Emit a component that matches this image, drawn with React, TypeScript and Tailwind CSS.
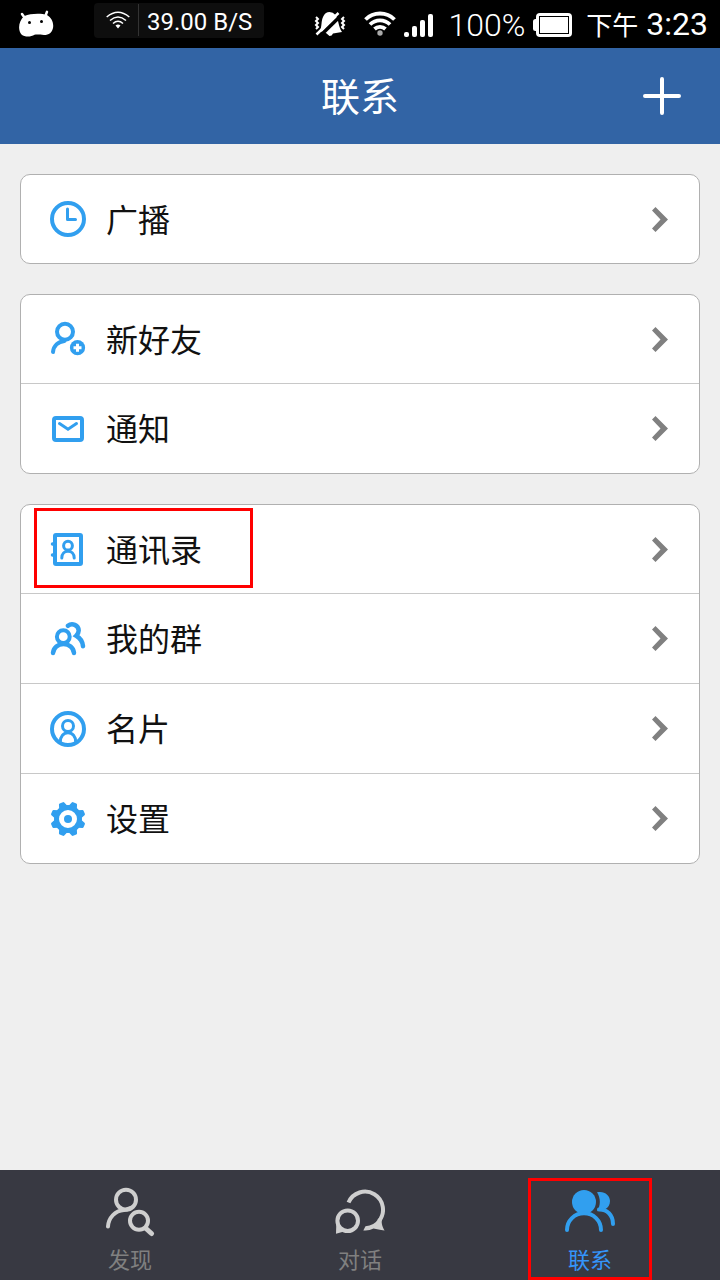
import type { ReactNode } from "react";

type Row = { label: string; icon: ReactNode; highlight?: boolean };
type Tab = { label: string; icon: ReactNode; active?: boolean };

function RowIcon({ children }: { children: ReactNode }) {
  return (
    <svg viewBox="0 0 36 36" className="w-9 h-9 shrink-0 text-[#319fef]" fill="none" stroke="currentColor"
      strokeWidth="4" strokeLinecap="round" aria-hidden="true">
      {children}
    </svg>
  );
}

function TabIcon({ children }: { children: ReactNode }) {
  return (
    <svg viewBox="0 0 50 50" className="w-[50px] h-[50px]" fill="none" stroke="currentColor"
      strokeWidth="4" strokeLinecap="round" aria-hidden="true">
      {children}
    </svg>
  );
}

const groups: Row[][] = [
  [
    {
      label: "广播",
      icon: (
        <RowIcon>
          <circle cx="18" cy="18" r="16" />
          <path d="M17.5 8V18.5H25.5" strokeWidth="3" strokeLinejoin="round" />
        </RowIcon>
      ),
    },
  ],
  [
    {
      label: "新好友",
      icon: (
        <RowIcon>
          <circle cx="15" cy="10.7" r="8" />
          <path d="M3 31C3.5 25 8 20.5 14.5 20" />
          <circle cx="27.5" cy="26.7" r="7.6" fill="currentColor" stroke="none" />
          <path d="M23.5 26.7H31.5M27.5 22.7V30.7" stroke="#fff" strokeWidth="3" strokeLinecap="butt" />
        </RowIcon>
      ),
    },
    {
      label: "通知",
      icon: (
        <RowIcon>
          <rect x="4" y="7" width="28" height="22" rx="2" />
          <path d="M9.5 12.5L18 18.3L26.5 12.5" strokeWidth="3" />
        </RowIcon>
      ),
    },
  ],
  [
    {
      label: "通讯录",
      highlight: true,
      icon: (
        <RowIcon>
          <rect x="5" y="4" width="26" height="29" rx="1" />
          <path d="M2.5 13H4M2.5 24H4" strokeWidth="3.5" />
          <circle cx="18" cy="14.7" r="4.4" strokeWidth="3" />
          <path d="M11.8 27C11.8 23 14.5 20.3 18 20.3S24.2 23 24.2 27" strokeWidth="3" />
        </RowIcon>
      ),
    },
    {
      label: "我的群",
      icon: (
        <RowIcon>
          <circle cx="13.3" cy="15.7" r="6.4" />
          <path d="M3 32C3.5 26.5 8 23 13.5 23S23.5 26.5 24 32" strokeWidth="4.5" />
          <path d="M18 4.8C22 1.4 28.5 4 28.7 9.5C28.7 12 27.5 13.5 26.2 14.8C30 17 32.6 20.5 33 25.2" strokeWidth="4.5" />
        </RowIcon>
      ),
    },
    {
      label: "名片",
      icon: (
        <RowIcon>
          <circle cx="18" cy="18" r="16" />
          <circle cx="18" cy="15" r="5.5" strokeWidth="3" />
          <path d="M10.3 31C10.3 25.5 13.5 21.8 18 21.8S25.7 25.5 25.7 31" strokeWidth="3" />
        </RowIcon>
      ),
    },
    {
      label: "设置",
      icon: (
        <RowIcon>
          <circle cx="18" cy="18" r="11.5" strokeWidth="5" />
          <circle cx="18" cy="18" r="4" fill="currentColor" stroke="none" />
          {[22.5, 67.5, 112.5, 157.5, 202.5, 247.5, 292.5, 337.5].map((angle) => (
            <path key={angle} d="M16.3 1.7H19.7L21.2 6H14.8Z" fill="currentColor" strokeWidth="2.5"
              strokeLinejoin="round" transform={`rotate(${angle} 18 18)`} />
          ))}
        </RowIcon>
      ),
    },
  ],
];

const tabs: Tab[] = [
  {
    label: "发现",
    icon: (
      <TabIcon>
        <circle cx="21" cy="12.7" r="10" />
        <path d="M3 39.5C3.5 31 10 23.5 19 23" />
        <path d="M18 21.5L31 17C27 19.5 24.5 22 22.5 24.5H18Z" fill="currentColor" stroke="none" />
        <circle cx="34" cy="33.7" r="9" />
        <path d="M41 41.5L46.5 46.5" strokeWidth="5" />
      </TabIcon>
    ),
  },
  {
    label: "对话",
    icon: (
      <TabIcon>
        <circle cx="12.7" cy="33.7" r="10.3" />
        <path d="M1.3 37L1 46.8L9 44.5Z" fill="currentColor" stroke="none" />
        <path d="M13.5 15.5A18 18 0 1 1 44 34" strokeLinecap="butt" />
        <path d="M47.5 31C45.8 35 47 39 49.6 43.6C44.5 43 42 42 38.5 41.6Q34 44 28.3 43.4L30.5 39.2Q39 39 44 31Z"
          fill="currentColor" stroke="none" />
      </TabIcon>
    ),
  },
  {
    label: "联系",
    active: true,
    icon: (
      <TabIcon>
        <circle cx="19" cy="15" r="12" fill="currentColor" stroke="none" />
        <path d="M2 43C2 33.5 9.5 26.3 19 26.3S36 33.5 36 43" />
        <path d="M32 5.3C39 3.5 45 8 45 14C45 18 43 20.5 40.5 22L32 24.3C35.8 18.5 35.8 11.5 32 5.3Z"
          fill="currentColor" stroke="none" />
        <path d="M34 22.5C42 22.2 48 28 48 37" />
      </TabIcon>
    ),
  },
];

function StatusBar() {
  return (
    <div className="flex h-12 items-center bg-black pl-[18px] pr-3 text-white">
      <svg viewBox="0 0 36 28" className="h-7 w-9" fill="currentColor" aria-hidden="true">
        <path d="M6.500 6C12 3.500 23 3 29 5C33.500 7.500 36 13 35 18C34 22.500 31 25 26 25C22.500 25 20 24.300 16.500 24.800C13 27 7 27.500 3.500 24.500C-0.500 20 0.500 10.500 6.500 6Z" />
        <path d="M4 4L7.500 9M29 1.800L27 7" stroke="currentColor" strokeWidth="2.500" strokeLinecap="round" />
        <circle cx="11.500" cy="12.500" r="1.500" fill="#000" />
        <circle cx="23.500" cy="11.500" r="1.500" fill="#000" />
      </svg>

      <div className="mb-2 ml-10 flex h-[35px] items-center rounded-sm bg-[#0e0e0e] px-3">
        <svg viewBox="0 0 24 18" className="mr-2 h-[18px] w-6" fill="none" stroke="currentColor" strokeWidth="1.5" aria-hidden="true">
          <path d="M0.700 6Q12 -3.500 23.300 6M4 9.500Q12 2.500 20 9.500M7 12.500Q12 8 17 12.500" />
          <path d="M9.500 14.500Q12 12.500 14.500 14.500L12 17.500Z" fill="currentColor" stroke="none" />
        </svg>
        <span className="border-l border-[#333] pl-2 pt-1 text-2xl leading-7">39.00 B/S</span>
      </div>

      <div className="ml-auto flex items-center">
        <svg viewBox="0 0 32 26" className="h-[26px] w-8" fill="currentColor" aria-hidden="true">
          <path d="M5.500 20C8.500 16 6.500 10 9.500 5Q11.500 1 15.500 1Q19 1 21.500 4C25 9 24 15 28 21L19 22.500Q18 25 15.500 25L12 22Z" />
          <path d="M5.500 25.500L28 3.500" stroke="#000" strokeWidth="3.500" />
          <path d="M2.500 23.500L24.500 2" stroke="currentColor" strokeWidth="2.500" />
          <path d="M2 6L4 8L2 10L4 12L2 14L4 16L2 18M30 6L28 8L30 10L28 12L30 14L28 16L30 18"
            fill="none" stroke="currentColor" strokeWidth="2" />
        </svg>
        <svg viewBox="0 0 32 26" className="ml-[18px] h-[26px] w-8" fill="none" stroke="currentColor" strokeWidth="3.800" aria-hidden="true">
          <path d="M1.500 8.500A20.500 20.500 0 0 1 30.500 8.500M6 13.500A14.100 14.100 0 0 1 26 13.500M10.500 18A8 8 0 0 1 21.500 18" />
          <circle cx="16" cy="22" r="2.700" fill="#aaa" stroke="none" />
        </svg>
        <svg viewBox="0 0 30 24" className="ml-2 mt-1 h-6 w-[30px]" fill="currentColor" aria-hidden="true">
          <rect x="0" y="18" width="5" height="5" rx="2" />
          <rect x="8" y="12" width="5" height="11" rx="2" />
          <rect x="16" y="6" width="5" height="17" rx="2" />
          <rect x="24" y="0" width="5" height="23" rx="2" />
        </svg>
        <span className="ml-[14px] pt-0.5 text-[32px] leading-[46px] font-light">100%</span>
        <svg viewBox="0 0 39 24" className="ml-2 mt-0.5 h-6 w-[39px]" fill="currentColor" aria-hidden="true">
          <rect x="3" y="0" width="36" height="24" rx="4" />
          <rect x="0" y="6" width="6" height="12" rx="2.500" />
          <rect x="6.500" y="3.500" width="29" height="17" fill="none" stroke="#000" />
        </svg>
        <span className="ml-[14px] pt-1 text-[26px] leading-[44px]">下午</span>
        <span className="ml-2 text-[32px] leading-[48px]">3:23</span>
      </div>
    </div>
  );
}

export default function App() {
  return (
    <div className="flex min-h-screen flex-col bg-[#efefef] font-[Roboto,'Noto_Sans_CJK_SC',sans-serif]">
      <StatusBar />

      <header className="grid h-24 grid-cols-[1fr_auto_1fr] items-center bg-[#3264a5] px-[38px] text-white">
        <h1 className="col-start-2 pt-1 text-[39px] leading-[48px]">联系</h1>
        <button type="button" aria-label="添加" className="justify-self-end">
          <svg viewBox="0 0 40 40" className="h-10 w-10" stroke="currentColor" strokeWidth="4" strokeLinecap="round" aria-hidden="true">
            <path d="M3 20H37M20 3V37" />
          </svg>
        </button>
      </header>

      <main className="flex flex-1 flex-col gap-[30px] px-5 py-[30px]">
        {groups.map((rows) => (
          <ul key={rows[0].label} className="rounded-[10px] border border-[#b0b0b0] bg-white">
            {rows.map((row) => (
              <li key={row.label} className="relative h-[90px] border-t border-[#c8c8c8] first:h-[88px] first:border-t-0">
                <button type="button" className="flex h-full w-full items-center pl-[29px] pr-[31px] text-left">
                  {row.icon}
                  <span className="ml-5 flex-1 pt-[3px] text-[32px] leading-[48px] text-[#111]">{row.label}</span>
                  <svg viewBox="0 0 16 25" className="h-[25px] w-4 text-[#808080]" fill="currentColor" aria-hidden="true">
                    <path d="M3.500 0L0 3.500L8.500 12.500L0 21.500L3.500 25L16 12.500Z" />
                  </svg>
                </button>
                {row.highlight && (
                  <span className="pointer-events-none absolute left-[13px] top-[3px] h-20 w-[219px] border-[3px] border-[#f00]" />
                )}
              </li>
            ))}
          </ul>
        ))}
      </main>

      <nav className="grid h-[110px] grid-cols-3 bg-[#383942] px-[15px]">
        {tabs.map((tab) => (
          <button key={tab.label} type="button" aria-current={tab.active ? "page" : undefined}
            className={`relative flex flex-col items-center pt-[17px] ${tab.active ? "text-[#319fef]" : "text-[#cfcfcf]"}`}>
            {tab.icon}
            <span className={`mt-[11px] text-[22px] leading-[26px] ${tab.active ? "text-[#3495fa]" : "text-[#808080]"}`}>
              {tab.label}
            </span>
            {tab.active && (
              <span className="pointer-events-none absolute bottom-0 left-1/2 top-2 w-[124px] -translate-x-1/2 border-[3px] border-[#f00]" />
            )}
          </button>
        ))}
      </nav>
    </div>
  );
}
